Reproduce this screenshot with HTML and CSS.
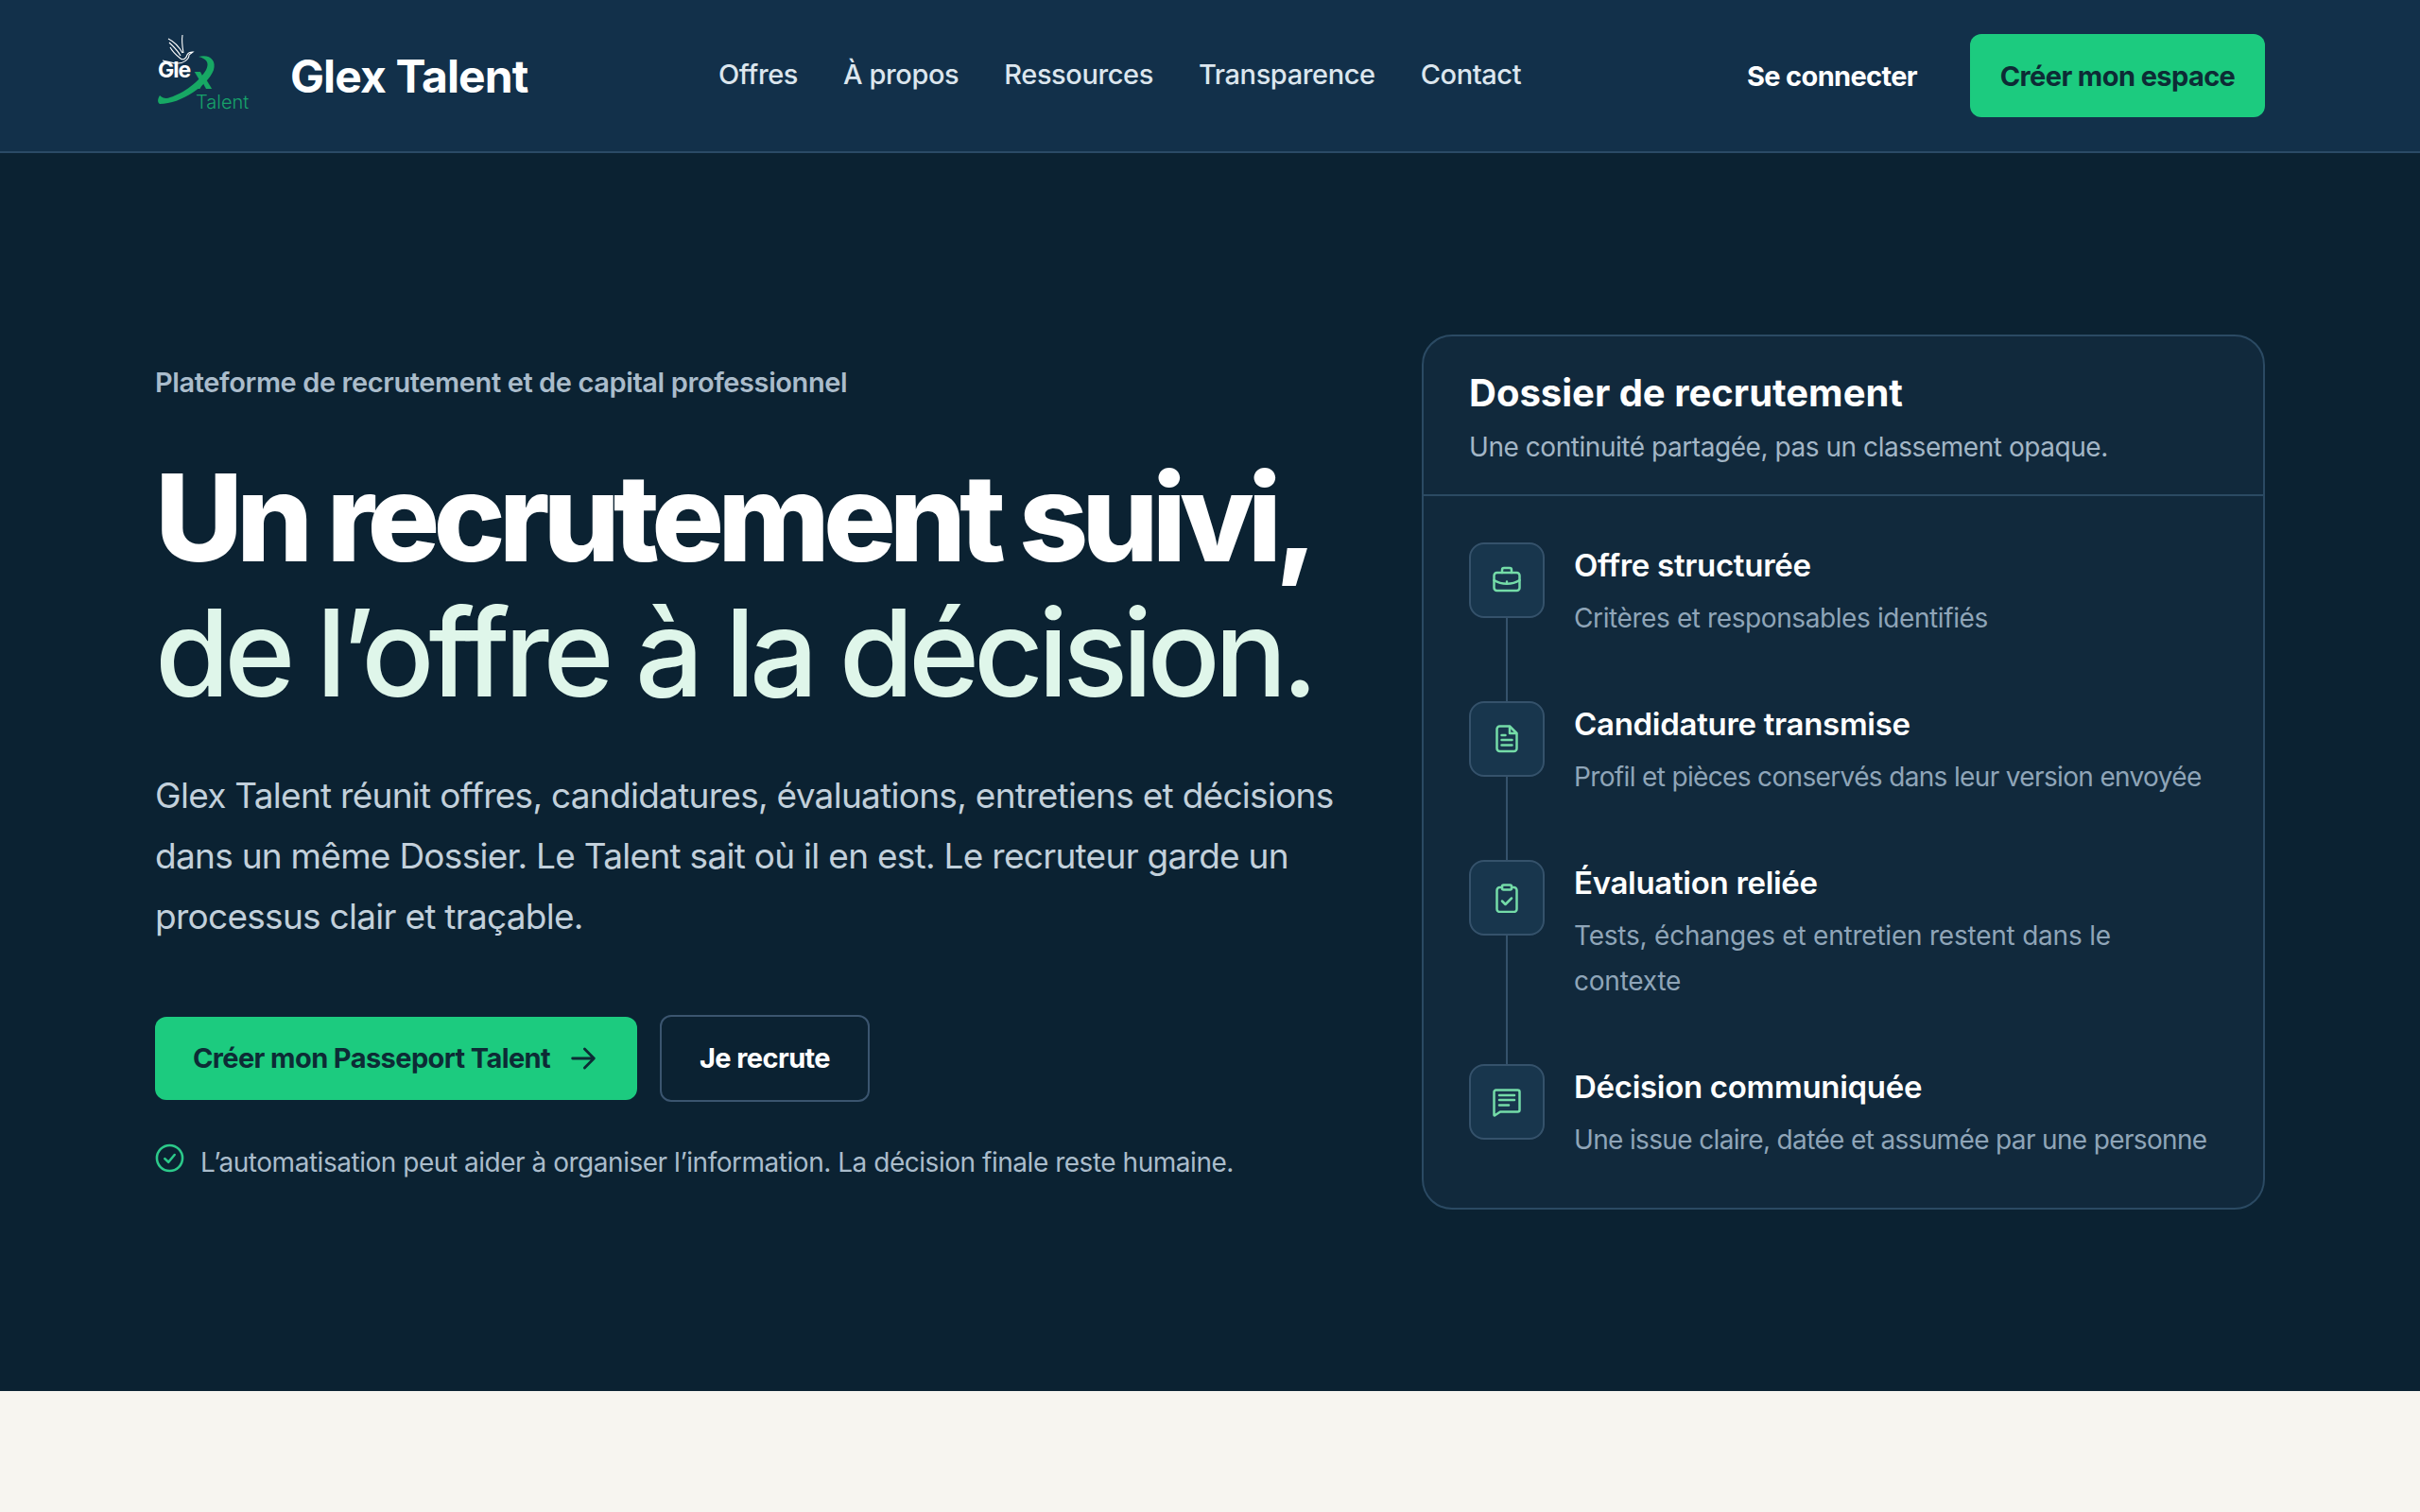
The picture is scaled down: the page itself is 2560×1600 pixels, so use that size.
FILE: index.html
```html
<!DOCTYPE html>
<html lang="fr">
<head>
    <meta charset="UTF-8">
    <meta name="viewport" content="width=device-width, initial-scale=1.0">
    <title>Glex Talent</title>
    <link rel="stylesheet" href="styles.css">
</head>
<body>
    <header class="site-header">
        <a class="brand" href="#">
            <svg class="brand-logo" viewBox="0 2 110 96" fill="none">
                <path d="M50 30C62 27 69 34 66 44C60 60 32 80 9 80C6 78 7 74 9 71C12 74 16 75 20 73C34 69 51 56 58 44C62 36 58 32 50 30Z" fill="#17a864"/>
                <path class="dove" d="M18 11C22 13 28 17 33 26M19 15C22 18 27 22 31 29M20 20C22 24 26 28 31 32M33 7C32 13 33 20 34 26M31 32C34 34 37 32 38 28C39 26 41 25 44 25L40 28C40 33 34 37 28 37C22 37 17 35 12 34"/>
                <text class="logo-gle" x="7" y="52">Gle</text>
                <text class="logo-x" x="45" y="64">x</text>
                <text class="logo-talent" x="47" y="85">Talent</text>
            </svg>
            <span class="brand-name">Glex Talent</span>
        </a>
        <nav class="main-nav">
            <a href="#">Offres</a>
            <a href="#">À propos</a>
            <a href="#">Ressources</a>
            <a href="#">Transparence</a>
            <a href="#">Contact</a>
        </nav>
        <div class="header-actions">
            <a class="login" href="#">Se connecter</a>
            <a class="btn btn-primary" href="#">Créer mon espace</a>
        </div>
    </header>

    <main class="hero">
        <section class="hero-text">
            <p class="eyebrow">Plateforme de recrutement et de capital professionnel</p>
            <h1>Un recrutement suivi,<br><span class="h1-light">de l’offre à la décision.</span></h1>
            <p class="lead">Glex Talent réunit offres, candidatures, évaluations, entretiens et décisions<br>dans un même Dossier. Le Talent sait où il en est. Le recruteur garde un<br>processus clair et traçable.</p>
            <div class="hero-actions">
                <a class="btn btn-primary btn-arrow" href="#">Créer mon Passeport Talent
                    <svg class="arrow" viewBox="0 0 24 24" fill="none" stroke="currentColor" stroke-width="2" stroke-linecap="round" stroke-linejoin="round"><path d="M4 12h16M13 5l7 7-7 7"/></svg>
                </a>
                <a class="btn btn-outline" href="#">Je recrute</a>
            </div>
            <p class="note">
                <svg class="note-icon" viewBox="0 0 24 24" fill="none" stroke="currentColor" stroke-width="2" stroke-linecap="round" stroke-linejoin="round"><circle cx="12" cy="12" r="10.5"/><path d="M8 12.5l3 2.8 5-6"/></svg>
                L’automatisation peut aider à organiser l’information. La décision finale reste humaine.
            </p>
        </section>

        <aside class="dossier">
            <div class="dossier-head">
                <h2>Dossier de recrutement</h2>
                <p>Une continuité partagée, pas un classement opaque.</p>
            </div>
            <ul class="steps">
                <li class="step">
                    <div class="step-rail">
                        <span class="step-icon">
                            <svg viewBox="0 0 32 32"><rect x="2.500" y="8" width="27" height="19" rx="3"/><path d="M11 8V5a2 2 0 0 1 2-2h6a2 2 0 0 1 2 2v3M2.500 16c8 5 19 5 27 0M16 17.500v.1"/></svg>
                        </span>
                        <span class="step-line"></span>
                    </div>
                    <div class="step-body">
                        <h3>Offre structurée</h3>
                        <p>Critères et responsables identifiés</p>
                    </div>
                </li>
                <li class="step step-long">
                    <div class="step-rail">
                        <span class="step-icon">
                            <svg viewBox="0 0 32 32"><path d="M8.500 2.500H19l7.500 7.500v16a3 3 0 0 1-3 3h-15a3 3 0 0 1-3-3v-20.500a3 3 0 0 1 3-3z"/><path d="M19 3v7h7M10.500 12h4M10.500 17h11M10.500 22.500h11"/></svg>
                        </span>
                        <span class="step-line"></span>
                    </div>
                    <div class="step-body">
                        <h3>Candidature transmise</h3>
                        <p>Profil et pièces conservés dans leur version envoyée</p>
                    </div>
                </li>
                <li class="step step-wrap">
                    <div class="step-rail">
                        <span class="step-icon">
                            <svg viewBox="0 0 32 32"><path d="M11 5H8.500a3 3 0 0 0-3 3v20a3 3 0 0 0 3 3h15a3 3 0 0 0 3-3V8a3 3 0 0 0-3-3H21"/><rect x="11" y="2.500" width="10" height="5" rx="1.500"/><path d="M11 19.500l3.500 3.500 6.500-6.500"/></svg>
                        </span>
                        <span class="step-line"></span>
                    </div>
                    <div class="step-body">
                        <h3>Évaluation reliée</h3>
                        <p>Tests, échanges et entretien restent dans le<br>contexte</p>
                    </div>
                </li>
                <li class="step step-long">
                    <div class="step-rail">
                        <span class="step-icon">
                            <svg viewBox="0 0 32 32"><path d="M2.500 5.500a2 2 0 0 1 2-2h23a2 2 0 0 1 2 2v19a2 2 0 0 1-2 2H9l-6 4a.5.5 0 0 1-.5-.5z"/><path d="M8 9h16M8 14h16M8 19.500h10"/></svg>
                        </span>
                    </div>
                    <div class="step-body">
                        <h3>Décision communiquée</h3>
                        <p>Une issue claire, datée et assumée par une personne</p>
                    </div>
                </li>
            </ul>
        </aside>
    </main>

    <div class="next-section"></div>
</body>
</html>
```

FILE: styles.css
```css
* {
    box-sizing: border-box;
}

body {
    font-family: 'Inter', 'Noto Sans', sans-serif;
    background-color: #f7f5f0;
    margin: 0;
    min-height: 100vh;
    color: #fff;
}

a {
    color: inherit;
    text-decoration: none;
}

/* Header */
.site-header {
    display: flex;
    align-items: center;
    height: 162px;
    padding: 0 164px;
    background-color: #12304a;
    border-bottom: 2px solid #2b4a66;
}

.brand {
    display: flex;
    align-items: center;
    gap: 37px;
    width: 596px;
}

.brand-logo {
    width: 110px;
    height: 96px;
    margin-left: -4px;
    flex: none;
}

.dove {
    stroke: #fff;
    stroke-width: 1.1;
}

.logo-gle {
    font-size: 23px;
    font-weight: 700;
    letter-spacing: -1px;
    fill: #fff;
}

.logo-x {
    font-size: 33px;
    font-weight: 800;
    fill: #17a864;
}

.logo-talent {
    font-size: 20px;
    font-weight: 300;
    fill: #17a36a;
}

.brand-name {
    font-size: 48px;
    font-weight: 700;
    letter-spacing: -0.9px;
}

.main-nav {
    display: flex;
    gap: 48px;
    margin-bottom: 4px;
    font-size: 29px;
    font-weight: 500;
    letter-spacing: -0.4px;
    color: #dce6ee;
}

.header-actions {
    display: flex;
    align-items: center;
    gap: 56px;
    margin-left: auto;
    font-size: 29px;
    font-weight: 700;
    letter-spacing: -0.65px;
}

.btn {
    display: inline-flex;
    align-items: center;
    justify-content: center;
    height: 88px;
    border-radius: 12px;
    font-size: 29px;
    font-weight: 700;
    letter-spacing: -0.6px;
}

.btn-primary {
    width: 312px;
    background-color: #1ccb7f;
    color: #0d2b35;
}

.btn-arrow {
    width: 510px;
    gap: 18px;
}

.arrow {
    width: 34px;
    height: 34px;
}

.btn-outline {
    width: 222px;
    height: 92px;
    border: 2px solid #3b556f;
    color: #fff;
}

/* Hero */
.hero {
    display: grid;
    grid-template-columns: 1260px 892px;
    justify-content: space-between;
    align-items: center;
    padding: 192px 164px;
    background-color: #0b2232;
}

.eyebrow {
    margin: 0;
    font-size: 29px;
    line-height: 48px;
    font-weight: 600;
    letter-spacing: -0.4px;
    color: #aabccb;
}

h1 {
    margin: 47px 0 0;
    font-size: 128px;
    line-height: 143px;
    font-weight: 800;
    letter-spacing: -7px;
}

.h1-light {
    font-weight: 500;
    letter-spacing: -6px;
    color: #dff6ea;
}

.lead {
    margin: 48px 0 0;
    font-size: 37px;
    line-height: 64px;
    font-weight: 400;
    letter-spacing: -0.72px;
    color: #c2d0db;
}

.hero-actions {
    display: flex;
    align-items: center;
    gap: 24px;
    margin-top: 72px;
}

.note {
    display: flex;
    align-items: flex-start;
    gap: 17px;
    margin: 40px 0 0;
    font-size: 28px;
    line-height: 48px;
    letter-spacing: -0.47px;
    color: #aabccb;
}

.note-icon {
    width: 31px;
    height: 31px;
    margin-top: 4px;
    color: #2cc98a;
    flex: none;
}

/* Dossier card */
.dossier {
    background-color: #11293c;
    border: 2px solid #2b4a63;
    border-radius: 32px;
}

.dossier-head {
    padding: 32px 48px 26px;
    border-bottom: 2px solid #2b4a63;
}

.dossier-head h2 {
    margin: 0;
    font-size: 40px;
    line-height: 56px;
    font-weight: 700;
}

.dossier-head p {
    margin: 5px 0 0;
    font-size: 28px;
    line-height: 48px;
    letter-spacing: -0.45px;
    color: #a3b6c6;
}

.steps {
    list-style: none;
    margin: 0;
    padding: 49px 48px 48px;
}

.step {
    display: flex;
    gap: 31px;
}

.step-rail {
    display: flex;
    flex-direction: column;
    align-items: center;
    width: 80px;
    flex: none;
}

.step-icon {
    display: flex;
    align-items: center;
    justify-content: center;
    width: 80px;
    height: 80px;
    flex: none;
    background-color: #18364d;
    border: 2px solid #35526b;
    border-radius: 16px;
    color: #74dca8;
}

.step-icon svg {
    width: 32px;
    height: 32px;
    fill: none;
    stroke: currentColor;
    stroke-width: 2.5;
    stroke-linecap: round;
    stroke-linejoin: round;
}

.step-line {
    flex: 1;
    width: 2px;
    background-color: #35526b;
}

.step-body {
    padding: 4px 0 64px;
}

.step:last-child .step-body {
    padding-bottom: 0;
}

.step-body h3 {
    margin: 0;
    font-size: 33px;
    line-height: 40px;
    font-weight: 600;
    letter-spacing: -0.3px;
}

.step-body p {
    margin: 12px 0 0;
    font-size: 28px;
    line-height: 48px;
    letter-spacing: -0.4px;
    color: #8fa5b8;
}

.step-long p {
    letter-spacing: -0.65px;
}

.step-wrap p {
    letter-spacing: -0.22px;
}

.next-section {
    height: 128px;
}
```
